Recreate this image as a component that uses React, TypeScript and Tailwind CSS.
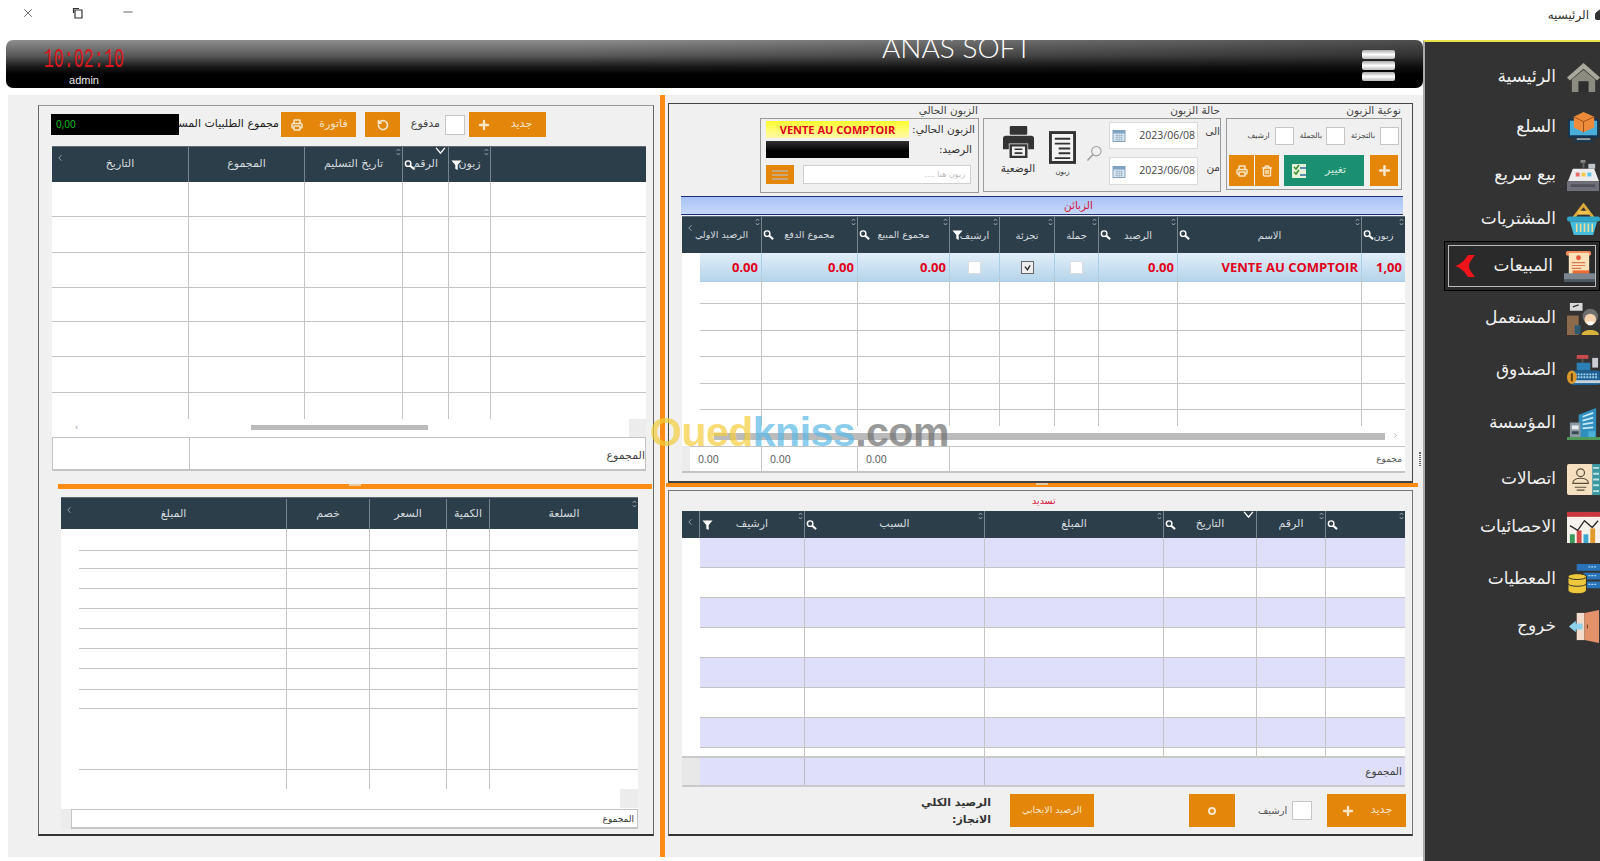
import React from "react";
import { Printer, Trash2, Plus, RotateCcw, Home, X, Minus, ChevronLeft, ChevronRight } from "lucide-react";

const Mag = ({ className = "" }: { className?: string }) => (
  <svg viewBox="0 0 12 12" className={`w-[11px] h-[11px] ${className}`}>
    <circle cx="4.5" cy="4.5" r="3" fill="none" stroke="#fff" strokeWidth="1.6" />
    <path d="M6.8 6.8L11 10.5" stroke="#fff" strokeWidth="2.2" />
  </svg>
);
const Funnel = ({ className = "" }: { className?: string }) => (
  <svg viewBox="0 0 12 12" className={`w-[11px] h-[11px] ${className}`}>
    <path d="M0.5 1H11.5L7.3 6V11.5L4.7 10V6Z" fill="#fff" />
  </svg>
);
const Sort = () => (
  <svg viewBox="0 0 6 10" className="absolute right-[1px] top-[1px] w-[5px] h-[8px]">
    <path d="M1 3.5L3 1.2L5 3.5M1 6.5L3 8.8L5 6.5" fill="none" stroke="#c9d2d8" strokeWidth="0.9" />
  </svg>
);
const Tick = ({ className = "" }: { className?: string }) => (
  <svg viewBox="0 0 12 8" className={`absolute w-[11px] h-[7px] top-0 ${className}`}>
    <path d="M1 1L6 7L11 1" fill="none" stroke="#fff" strokeWidth="1.6" />
  </svg>
);

type H = { t?: string; mag?: boolean; fun?: boolean; chev?: boolean; sort?: boolean; tick?: string; span?: string; size?: string };

function HeadCell({ c, last }: { c: H; last: boolean }) {
  return (
    <div className={`relative flex items-center justify-center text-[#d4dbdf] ${c.size ?? "text-[11px]"} ${c.span ?? ""} ${last ? "" : "border-r border-[#75848f]"}`}>
      {c.chev && <ChevronLeft className="absolute left-[3px] top-[6px] w-[10px] h-[10px]" strokeWidth={1.5} />}
      {c.mag && <Mag className="absolute left-[1px] top-1/2 -translate-y-1/2" />}
      {c.fun && <Funnel className="absolute left-[2px] top-1/2 -translate-y-1/2" />}
      {c.sort && <Sort />}
      {c.tick && <Tick className={c.tick} />}
      <span className="whitespace-nowrap">{c.t}</span>
    </div>
  );
}

function Rows({ cols, n, heights, gap }: { cols: string; n: number; heights: number[]; gap?: boolean }) {
  return (
    <>
      {heights.map((h, i) => (
        <div key={i} className={`grid ${cols}`} style={{ height: h }}>
          {Array.from({ length: n }).map((_, j) => {
            const noBottom = i === heights.length - 1 || (gap && j === 0);
            const noRight = j === n - 1 || (gap && j === 0);
            return <div key={j} className={`${noBottom ? "" : "border-b border-[#c4c4c4]"} ${noRight ? "" : "border-r border-[#c4c4c4]"}`} />;
          })}
        </div>
      ))}
    </>
  );
}

const Check = ({ className = "" }: { className?: string }) => <div className={`bg-white border border-[#c6c6c6] ${className}`} />;

const OBtn = ({ className = "", children }: { className?: string; children?: React.ReactNode }) => (
  <div className={`bg-[#e38609] text-[#f7e6c8] flex items-center justify-center h-full ${className}`}>{children}</div>
);

const Calendar = () => (
  <svg viewBox="0 0 14 14" className="w-[14px] h-[15px]">
    <rect x="1" y="2" width="12" height="11" fill="#dbe9f5" stroke="#6c8aa8" strokeWidth="0.8" />
    <rect x="1" y="2" width="12" height="3" fill="#7fa3c4" />
    <path d="M3 7H11M3 9H11M3 11H11M5 5V13M7.2 5V13M9.4 5V13" stroke="#90a6bc" strokeWidth="0.5" />
  </svg>
);

const DateBox = ({ h }: { h: string }) => (
  <div className={`w-[89px] ${h} bg-white border border-[#dadada] flex items-center justify-between pl-[2px] pr-[2px]`}>
    <Calendar />
    <span className="text-[10.5px] text-[#444] [font-family:'Open_Sans',sans-serif]">2023/06/08</span>
  </div>
);

const Group = ({ title, w, h, children }: { title: string; w: string; h: string; children: React.ReactNode }) => (
  <div className={`flex flex-col ${w}`}>
    <div className="h-[14px] text-[10.5px] leading-[13px] text-[#444] text-right pr-[1px] whitespace-nowrap">{title}</div>
    <div className={`${h} border border-[#9a9a9a] bg-[#f0f0f0]`}>{children}</div>
  </div>
);

const rightHead: H[] = [
  { t: "الرصيد الاولي", chev: true, sort: true, span: "col-span-2", size: "text-[9.5px]" },
  { t: "مجموع الدفع", mag: true, sort: true, size: "text-[9.5px]" },
  { t: "مجموع المبيع", mag: true, sort: true, size: "text-[9.5px]" },
  { t: "ارشيف", fun: true, sort: true, size: "text-[10px]" },
  { t: "تجزئة", sort: true, size: "text-[10px]" },
  { t: "جملة", sort: true, size: "text-[10px]" },
  { t: "الرصيد", mag: true, sort: true, size: "text-[10px]" },
  { t: "الاسم", mag: true, sort: true, size: "text-[10px]" },
  { t: "زبون", mag: true, sort: true, size: "text-[10px]" },
];
const leftHead: H[] = [
  { t: "التاريخ", chev: true },
  { t: "المجموع" },
  { t: "تاريخ التسليم", sort: true },
  { t: "الرقم", mag: true, tick: "right-[2px]" },
  { t: "زبون", fun: true, sort: true },
  {},
];
const leftLowHead: H[] = [
  { t: "المبلغ", chev: true },
  { t: "خصم" },
  { t: "السعر" },
  { t: "الكمية" },
  { t: "السلعة", sort: true },
];
const payHead: H[] = [
  { t: "", chev: true },
  { t: "ارشيف", fun: true, sort: true },
  { t: "السبب", mag: true, sort: true },
  { t: "المبلغ", sort: true },
  { t: "التاريخ", mag: true, tick: "right-[2px]", sort: false },
  { t: "الرقم", sort: true },
  { t: "", mag: true, sort: true },
];

const I = ({ children }: { children: React.ReactNode }) => (
  <svg viewBox="0 0 34 34" className="w-[33px] h-[33px] shrink-0">{children}</svg>
);
const icons: Record<string, React.ReactNode> = {
  home: (
    <I>
      <path d="M0 17L17 2L34 17L31 20L17 8L3 20Z" fill="#a8a89c" />
      <path d="M5 19L17 9L29 19V32H22V21H12V32H5Z" fill="#8b8b80" />
      <rect x="12" y="21" width="10" height="11" fill="#2e2e2e" />
    </I>
  ),
  box: (
    <I>
      <rect x="1" y="8" width="32" height="20" rx="2" fill="#16344e" />
      <rect x="3" y="10" width="28" height="15" fill="#4aaedb" />
      <path d="M17 1L28 6V17L17 22L7 17V6Z" fill="#ed8b3a" />
      <path d="M7 6L17 11L28 6M17 11V22" fill="none" stroke="#9d4d18" strokeWidth="1" />
      <rect x="10" y="28" width="14" height="2" fill="#98a3ab" />
      <rect x="6" y="30" width="22" height="2" fill="#1a3850" />
    </I>
  ),
  register: (
    <I>
      <rect x="14" y="1" width="5" height="3" fill="#8b8b8b" />
      <rect x="16" y="3" width="2" height="6" fill="#666" />
      <path d="M6 10H28L33 23H1Z" fill="#ececec" />
      <rect x="9" y="14" width="4" height="4" fill="#ef6a6a" />
      <rect x="15" y="14" width="4" height="4" fill="#f5c842" />
      <rect x="21" y="14" width="4" height="4" fill="#5cc4e8" />
      <rect x="22" y="5" width="7" height="5" fill="#bfc5c9" />
      <rect x="0" y="23" width="33" height="10" fill="#70707a" />
      <rect x="4" y="26" width="25" height="3" fill="#52525c" />
    </I>
  ),
  basket: (
    <I>
      <path d="M7 15L17 2L27 15" fill="none" stroke="#d9a83a" strokeWidth="3" />
      <rect x="11" y="8" width="12" height="4" fill="#f2c24d" />
      <rect x="0" y="14" width="34" height="5" rx="2" fill="#2fa6c7" />
      <path d="M3 19H31L27 33H7Z" fill="#45bedd" />
      <path d="M10 21V30M14 21V30M18 21V30M22 21V30M26 21V30" stroke="#f0dc9a" strokeWidth="1.6" />
    </I>
  ),
  sales: (
    <I>
      <rect x="4" y="1" width="26" height="5" rx="2" fill="#f08a5a" />
      <rect x="7" y="3" width="21" height="22" fill="#fbe2b8" />
      <circle cx="17" cy="8" r="2.5" fill="#e4583a" />
      <path d="M10 13H24M10 16H24M10 19H20" stroke="#d97a52" strokeWidth="1.2" />
      <rect x="11" y="21" width="17" height="5" fill="#ee6a30" />
      <rect x="2" y="24" width="32" height="8" fill="#7c8690" />
      <rect x="2" y="30" width="32" height="3" fill="#4f5760" />
    </I>
  ),
  user: (
    <I>
      <rect x="3" y="1" width="13" height="8" fill="#dadada" />
      <path d="M6 5L12 3" stroke="#333" strokeWidth="1.4" />
      <rect x="0" y="14" width="12" height="20" fill="#8c6a4c" />
      <rect x="8" y="24" width="6" height="9" fill="#2f5b72" />
      <circle cx="24" cy="15" r="8" fill="#6e6e6e" />
      <circle cx="24" cy="18" r="6" fill="#f3d2ac" />
      <path d="M20 20H28L26 24H22Z" fill="#fff" />
      <path d="M15 34C15 27 33 27 33 34Z" fill="#d9b23e" />
    </I>
  ),
  cash: (
    <I>
      <rect x="10" y="1" width="12" height="4" fill="#c94b4b" />
      <rect x="15" y="5" width="2" height="5" fill="#555" />
      <rect x="10" y="9" width="14" height="8" fill="#2c7fb5" />
      <rect x="26" y="4" width="6" height="10" fill="#c9ccd0" />
      <rect x="4" y="17" width="30" height="15" rx="2" fill="#1f5f91" />
      <path d="M8 21H32M8 24H32" stroke="#9ed2ee" strokeWidth="2" strokeDasharray="2 1" />
      <rect x="6" y="27" width="28" height="3" fill="#c6d3dc" />
      <ellipse cx="5" cy="24" rx="5" ry="7" fill="#d9982b" />
      <rect x="4" y="20" width="2" height="8" fill="#5b3b10" />
    </I>
  ),
  building: (
    <I>
      <path d="M12 8L30 1V32H12Z" fill="#2f8fbf" />
      <path d="M16 10L27 6M16 14L27 11M16 18L27 16M16 22L27 21" stroke="#c8e8f5" strokeWidth="1.8" />
      <rect x="3" y="16" width="11" height="16" fill="#8a99a3" />
      <rect x="5" y="19" width="7" height="4" fill="#e6edf0" />
      <rect x="5" y="25" width="7" height="3" fill="#3a4a54" />
      <rect x="22" y="25" width="7" height="7" fill="#4bb1d9" />
      <rect x="0" y="31" width="34" height="3" fill="#4f9a58" />
    </I>
  ),
  contact: (
    <I>
      <rect x="0" y="1" width="27" height="32" rx="2" fill="#f4e0bf" />
      <rect x="26" y="1" width="8" height="32" fill="#3b97a0" />
      <path d="M27 5H33M27 11H33M27 17H33M27 23H33M27 29H33" stroke="#bde3e4" strokeWidth="2" />
      <circle cx="14" cy="10" r="4" fill="none" stroke="#5a4d3c" strokeWidth="1.2" />
      <path d="M6 21C6 14 22 14 22 21Z" fill="none" stroke="#5a4d3c" strokeWidth="1.2" />
      <path d="M8 25H20M10 28H18" stroke="#5a4d3c" strokeWidth="1.2" />
    </I>
  ),
  chart: (
    <I>
      <rect x="0" y="1" width="34" height="32" fill="#f6f1ea" />
      <rect x="0" y="1" width="34" height="5" fill="#c9383e" />
      <rect x="3" y="24" width="5" height="9" fill="#3a9a5b" />
      <rect x="10" y="20" width="5" height="13" fill="#d64a4a" />
      <rect x="17" y="24" width="5" height="9" fill="#3da9cf" />
      <rect x="24" y="18" width="5" height="15" fill="#e29a2e" />
      <path d="M3 15L11 20L18 10L26 17L32 10" fill="none" stroke="#2a2a2a" strokeWidth="1.4" />
    </I>
  ),
  data: (
    <I>
      <rect x="10" y="1" width="24" height="7" fill="#2b73b8" />
      <rect x="17" y="10" width="17" height="7" fill="#2b73b8" />
      <rect x="17" y="19" width="17" height="7" fill="#2b73b8" />
      <path d="M22 4H31M22 13H31M22 22H31" stroke="#a6d8f3" strokeWidth="1.5" strokeDasharray="2 1" />
      <path d="M1 14C1 10 20 10 20 14V28C20 33 1 33 1 28Z" fill="#eec83a" stroke="#2c2c2c" strokeWidth="1" />
      <path d="M1 14C1 18 20 18 20 14M1 21C1 25 20 25 20 21" fill="none" stroke="#2c2c2c" strokeWidth="1" />
    </I>
  ),
  door: (
    <I>
      <rect x="10" y="3" width="8" height="28" fill="#f3dccb" />
      <path d="M18 3L33 0V34L18 31Z" fill="#e2916b" />
      <path d="M21 15V19" stroke="#6b3a1e" strokeWidth="1" />
      <path d="M2 17L9 11V14H16V20H9V23Z" fill="#8fd0ea" />
    </I>
  ),
};

const menu = [
  { t: "الرئيسية", ic: "home", h: "h-[50px]" },
  { t: "السلع", ic: "box", h: "h-[50px]" },
  { t: "بيع سريع", ic: "register", h: "h-[46px]" },
  { t: "المشتريات", ic: "basket", h: "h-[42px]" },
  { t: "المبيعات", ic: "sales", h: "h-[52px]", active: true },
  { t: "المستعمل", ic: "user", h: "h-[52px]" },
  { t: "الصندوق", ic: "cash", h: "h-[52px]" },
  { t: "المؤسسة", ic: "building", h: "h-[54px]" },
  { t: "اتصالات", ic: "contact", h: "h-[58px]" },
  { t: "الاحصائيات", ic: "chart", h: "h-[38px]" },
  { t: "المعطيات", ic: "data", h: "h-[66px]" },
  { t: "خروج", ic: "door", h: "h-[28px]" },
];

const rowBg = "bg-[linear-gradient(180deg,#e2eef8,#b5d4ea)] border-b border-[#a9cfe6]";
const upperCols = "grid-cols-[18px_62px_96px_92px_50px_55px_44px_79px_184px_43px]";

export default function App() {
  return (
    <div className="w-[1600px] h-[861px] overflow-hidden bg-white flex flex-col [font-family:'DejaVu_Sans',sans-serif]">
      {/* window bar */}
      <div className="h-[40px] shrink-0 flex items-start justify-between">
        <div className="flex items-center gap-[37px] pl-[21px] pt-[6px] text-[#333]">
          <X className="w-[14px] h-[14px]" strokeWidth={1.2} />
          <svg viewBox="0 0 12 12" className="w-[12px] h-[12px]">
            <path d="M3 3H10V11H3Z M1.5 6V1.5H7" fill="none" stroke="#333" strokeWidth="1.2" />
          </svg>
          <Minus className="w-[14px] h-[14px] -mt-[3px]" strokeWidth={1.3} />
        </div>
        <div className="flex items-center gap-[5px] pt-[6px] mr-[-6px] text-[12px] text-[#333]">
          <span>الرئيسيه</span>
          <Home className="w-[12px] h-[12px]" fill="#333" />
        </div>
      </div>

      <div className="flex flex-1 min-h-0">
        <div className="w-[1423px] flex flex-col shrink-0">
          {/* header */}
          <div className="ml-[6px] w-[1417px] h-[48px] shrink-0 rounded-[7px] overflow-hidden flex items-start bg-[linear-gradient(90deg,rgba(0,0,0,0)_0%,rgba(0,0,0,0)_40%,rgba(0,0,0,0.45)_100%),linear-gradient(180deg,#8e8e8e_0%,#5a5a5a_32%,#1c1c1c_55%,#000_72%)]">
            <div className="ml-[36px] w-[84px] flex flex-col items-center pt-[9px]">
              <span className="text-[27px] leading-[23px] text-[#d8181c] whitespace-nowrap scale-x-[0.62] [font-family:'Liberation_Mono',monospace]">10:02:10</span>
              <span className="text-[11px] leading-[13px] mt-[2px] text-[#e8e8e8] [font-family:'Liberation_Sans',sans-serif]">admin</span>
            </div>
            <div className="ml-[756px] -mt-[11px] text-[28px] leading-[36px] text-white [font-family:'Lato',sans-serif] font-light whitespace-nowrap">ANAS SOFT</div>
            <div className="ml-auto mr-[28px] mt-[10px] flex flex-col gap-[2px]">
              <div className="w-[33px] h-[9px] rounded-[2px] bg-[linear-gradient(180deg,#aaa,#fff_50%,#bbb)]" />
              <div className="w-[33px] h-[9px] rounded-[2px] bg-[linear-gradient(180deg,#aaa,#fff_50%,#bbb)]" />
              <div className="w-[33px] h-[9px] rounded-[2px] bg-[linear-gradient(180deg,#aaa,#fff_50%,#bbb)]" />
            </div>
          </div>

          {/* main */}
          <div className="relative ml-[8px] mt-[7px] h-[762px] w-[1415px] bg-[#f0f0f0] flex shrink-0">
            {/* left panel */}
            <div className="ml-[30px] mt-[10px] w-[616px] h-[731px] shrink-0 border border-[#666] border-b-2 border-b-[#333] border-t-[#999] flex flex-col">
              <div className="h-[25px] mt-[6px] shrink-0 flex items-center pl-[12px]">
                <div className="w-[128px] h-[21px] bg-black text-[#18c418] text-[10px] pl-[5px] flex items-center [font-family:'Open_Sans',sans-serif] shrink-0">0,00</div>
                <div className="w-[100px] overflow-hidden text-[11px] text-[#222] whitespace-nowrap shrink-0 flex justify-end">مجموع الطلبيات المسددة</div>
                <OBtn className="ml-[2px] w-[75px] gap-[16px] text-[11px] shrink-0 pl-[2px]">
                  <Printer className="w-[12px] h-[12px]" strokeWidth={3} />
                  <span>فاتورة</span>
                </OBtn>
                <OBtn className="ml-[9px] w-[35px] shrink-0">
                  <RotateCcw className="w-[12px] h-[12px]" strokeWidth={3.5} />
                </OBtn>
                <div className="w-[45px] text-[11px] text-[#444] text-right pr-[5px] shrink-0">مدفوع</div>
                <Check className="w-[20px] h-[20px] shrink-0" />
                <OBtn className="ml-[4px] w-[77px] gap-[20px] text-[11px] shrink-0 pr-[6px]">
                  <Plus className="w-[14px] h-[14px]" strokeWidth={4} />
                  <span>جديد</span>
                </OBtn>
              </div>

              <div className="ml-[13px] w-[594px] mt-[9px] h-[325px] bg-white shrink-0 flex flex-col">
                <div className="grid grid-cols-[137px_116px_98px_46px_42px_155px] h-[36px] bg-[#2d3e4b] border-t border-[#5c6b75]">
                  {leftHead.map((c, i) => <HeadCell key={i} c={c} last={i === 5} />)}
                </div>
                <Rows cols="grid-cols-[137px_116px_98px_46px_42px_155px]" n={6} heights={[35, 36, 35, 34, 35, 36, 26]} />
                <div className="h-[18px] flex items-center justify-between relative">
                  <span className="ml-[23px] text-[8px] text-[#999]">‹</span>
                  <div className="absolute left-[199px] top-[6px] w-[177px] h-[5px] bg-[#bbb]" />
                  <div className="w-[17px] h-[18px] bg-[#ececec]" />
                </div>
                <div className="grid grid-cols-[137px_457px] h-[34px] border border-[#c4c4c4] border-b-2">
                  <div className="border-r border-[#c4c4c4]" />
                  <div className="text-[11px] text-[#444] text-right pr-[2px] pt-[10px]">المجموع</div>
                </div>
              </div>

              <div className="ml-[19px] w-[594px] mt-[13px] h-[5px] bg-[#ff8a14] shrink-0 flex justify-center">
                <div className="w-[12px] h-[2px] bg-[#e9c9a0]" />
              </div>

              <div className="ml-[22px] w-[577px] mt-[8px] h-[332px] shrink-0 bg-white flex flex-col">
                <div className="grid grid-cols-[226px_83px_77px_43px_148px] h-[32px] bg-[#2d3e4b] border-t border-[#5c6b75] pt-[1px]">
                  {leftLowHead.map((c, i) => <HeadCell key={i} c={c} last={i === 4} />)}
                </div>
                <Rows cols="grid-cols-[18px_208px_83px_77px_43px_148px]" n={6} gap heights={[22, 18, 20, 20, 20, 20, 20, 21, 19, 61, 19]} />
                <div className="h-[20px] flex justify-end">
                  <div className="w-[18px] h-[19px] bg-[#ececec]" />
                </div>
                <div className="flex h-[20px] bg-[#ececec]">
                  <div className="w-[10px]" />
                  <div className="flex-1 bg-white border border-[#c4c4c4] border-b-2 text-[9px] text-[#333] text-right pr-[3px] leading-[18px]">المجموع</div>
                </div>
              </div>
            </div>

            {/* vertical divider */}
            <div className="ml-[6px] w-[5px] h-full bg-[#ff8a14] shrink-0" />

            {/* right column */}
            <div className="ml-[3px] w-[745px] mt-[8px] flex flex-col shrink-0">
              <div className="h-[380px] shrink-0 border border-[#444] border-b-2 flex flex-col">
                <div className="flex items-start justify-end pr-[10px] gap-[4px] h-[89px] shrink-0">
                  <Group title="الزبون الحالي" w="w-[219px]" h="h-[75px]">
                    <div className="flex flex-col pl-[5px] pt-[2px] pr-[3px]">
                      <div className="flex items-center h-[17px] justify-between">
                        <div className="w-[143px] h-[17px] bg-[linear-gradient(180deg,#ffff30,#fff8a8)] text-[#e0001a] font-bold text-[11px] text-center leading-[17px] [font-family:'Open_Sans',sans-serif]">VENTE AU COMPTOIR</div>
                        <span dir="rtl" className="text-[10.5px] text-[#333]">الزبون الحالي:</span>
                      </div>
                      <div className="flex items-center h-[17px] mt-[3px] justify-between">
                        <div className="w-[143px] h-[17px] bg-[linear-gradient(180deg,#333,#000_60%)]" />
                        <span dir="rtl" className="text-[10.5px] text-[#333] pr-[3px]">الرصيد:</span>
                      </div>
                      <div className="flex items-center h-[19px] mt-[7px]">
                        <div className="w-[28px] h-[19px] bg-[#e38609] flex flex-col justify-center gap-[2px] px-[6px]">
                          <div className="h-[2px] bg-[#c9a77a]" />
                          <div className="h-[2px] bg-[#c9a77a]" />
                          <div className="h-[2px] bg-[#c9a77a]" />
                        </div>
                        <div dir="rtl" className="ml-[9px] w-[168px] h-[19px] bg-white border border-[#cfcfcf] text-[8px] text-[#bbb] text-right pr-[5px] leading-[17px]">زبون هنا ....</div>
                      </div>
                    </div>
                  </Group>
                  <Group title="حالة الزبون" w="w-[238px]" h="h-[74px]">
                    <div className="flex items-start h-full pl-[17px]">
                      <div className="flex flex-col items-center w-[34px] pt-[6px]">
                        <svg viewBox="0 0 34 34" className="w-[33px] h-[33px]">
                          <rect x="8" y="1" width="18" height="9" rx="1" fill="#333" />
                          <path d="M4 11H30Q33 11 33 14V25H27V19H7V25H1V14Q1 11 4 11Z" fill="#333" />
                          <path d="M9 21H25V33H9Z" fill="none" stroke="#333" strokeWidth="2.5" />
                          <path d="M13 25H21M13 29H21" stroke="#333" strokeWidth="1.6" />
                        </svg>
                        <span className="text-[10.5px] text-[#333] mt-[3px] whitespace-nowrap">الوضعية</span>
                      </div>
                      <div className="flex flex-col items-center w-[28px] ml-[14px] pt-[12px]">
                        <svg viewBox="0 0 28 34" className="w-[27px] h-[33px]">
                          <rect x="1.5" y="1.5" width="25" height="31" fill="#f4f4f4" stroke="#333" strokeWidth="3" />
                          <path d="M6 8H22M6 13H22M10 18H22M10 23H22M6 28H22" stroke="#333" strokeWidth="2" />
                        </svg>
                        <span className="text-[7px] text-[#333] mt-[3px]">زبون</span>
                      </div>
                      <svg viewBox="0 0 17 17" className="w-[17px] h-[17px] ml-[10px] mt-[26px]">
                        <circle cx="11" cy="6" r="5" fill="none" stroke="#9a9a9a" strokeWidth="1.1" />
                        <path d="M7.5 9.5L1.5 16" stroke="#9a9a9a" strokeWidth="1.6" />
                      </svg>
                      <div className="flex flex-col gap-[8px] ml-[7px] pt-[3px]">
                        <DateBox h="h-[27px]" />
                        <DateBox h="h-[28px]" />
                      </div>
                      <div className="flex flex-col ml-[5px] text-[10.5px] text-[#444] pt-[5px] gap-[20px] w-[18px] text-right">
                        <span>الى</span>
                        <span>من</span>
                      </div>
                    </div>
                  </Group>
                  <Group title="نوعية الزبون" w="w-[176px] ml-[1px]" h="h-[72px]">
                    <div className="flex flex-col h-full">
                      <div className="flex items-center justify-end pt-[8px] pr-[2px] text-[7.5px] text-[#444]">
                        <span>ارشيف</span>
                        <Check className="w-[19px] h-[18px] ml-[5px]" />
                        <span className="ml-[6px]">بالجملة</span>
                        <Check className="w-[19px] h-[18px] ml-[4px]" />
                        <span className="ml-[6px]">بالتجزئة</span>
                        <Check className="w-[19px] h-[18px] ml-[5px]" />
                      </div>
                      <div className="flex justify-end h-[31px] mt-[10px] pr-[3px]">
                        <OBtn className="w-[25px]"><Printer className="w-[12px] h-[12px]" strokeWidth={3} /></OBtn>
                        <OBtn className="w-[24px] ml-[1px]"><Trash2 className="w-[12px] h-[12px]" strokeWidth={3} /></OBtn>
                        <div className="ml-[5px] w-[80px] h-full bg-[#1a9070] flex items-center gap-[18px] pl-[7px] text-[11px] text-[#cfe9df]">
                          <svg viewBox="0 0 16 16" className="w-[16px] h-[16px]">
                            <rect x="1" y="1" width="14" height="14" fill="#e6f2d8" />
                            <path d="M3 4L5 6L8 2M3 9L5 11L8 7" fill="none" stroke="#3d8f2e" strokeWidth="1.5" />
                            <path d="M9 12H15M9 5H15" stroke="#2d6da3" strokeWidth="1.5" />
                          </svg>
                          <span>تغيير</span>
                        </div>
                        <OBtn className="w-[28px] ml-[6px]"><Plus className="w-[15px] h-[15px]" strokeWidth={4} /></OBtn>
                      </div>
                    </div>
                  </Group>
                </div>

                <div className="ml-[12px] w-[722px] h-[19px] mt-[3px] shrink-0 border-y border-[#1d2f78] bg-[linear-gradient(180deg,#a9c3f5,#c6d8fa)] text-[10.5px] text-[#d4123c] pl-[383px] leading-[16px]">الزبائن</div>

                <div className="ml-[13px] w-[723px] mt-[1px] h-[210px] bg-white shrink-0 flex flex-col">
                  <div className={`grid ${upperCols} h-[37px] bg-[#2d3e4b] border-t border-[#5c6b75] shrink-0`}>
                    {rightHead.map((c, i) => <HeadCell key={i} c={c} last={i === 8} />)}
                  </div>
                  <div className={`grid ${upperCols} h-[25px] shrink-0 text-[#e0001a] font-bold text-[13px] leading-[28px] text-right [font-family:'Open_Sans',sans-serif]`}>
                    <div />
                    <div className={`${rowBg} border-r pr-[3px]`}>0.00</div>
                    <div className={`${rowBg} border-r pr-[3px]`}>0.00</div>
                    <div className={`${rowBg} border-r pr-[3px]`}>0.00</div>
                    <div className={`${rowBg} border-r flex items-center justify-center`}><Check className="w-[13px] h-[13px] border-[#ddd]" /></div>
                    <div className={`${rowBg} border-r flex items-center justify-center`}>
                      <div className="w-[13px] h-[13px] bg-[#eee] border border-[#666] flex items-center justify-center">
                        <svg viewBox="0 0 8 8" className="w-[7px] h-[7px]"><path d="M1 3L4 6.5L7 1.5" fill="none" stroke="#333" strokeWidth="1.6" /></svg>
                      </div>
                    </div>
                    <div className={`${rowBg} border-r flex items-center justify-center`}><Check className="w-[13px] h-[13px] border-[#ddd]" /></div>
                    <div className={`${rowBg} border-r pr-[3px]`}>0.00</div>
                    <div className={`${rowBg} border-r pr-[3px] whitespace-nowrap`}>VENTE AU COMPTOIR</div>
                    <div className={`${rowBg} pr-[3px]`}>1,00</div>
                  </div>
                  <Rows cols={upperCols} n={10} gap heights={[26, 27, 26, 27, 26, 16]} />
                </div>
                <div className="ml-[13px] w-[723px] h-[20px] bg-white shrink-0 flex items-center relative">
                  <div className="absolute left-[32px] top-[7px] w-[671px] h-[7px] bg-[#bbb]" />
                  <ChevronRight className="absolute right-[6px] top-[6px] w-[7px] h-[7px] text-[#888]" />
                </div>
                <div className="ml-[13px] w-[723px] h-[27px] shrink-0 flex bg-[#ececec] border-b-2 border-[#c4c4c4]">
                  <div className="w-[8px]" />
                  <div className="grid grid-cols-[72px_96px_92px_455px] flex-1 bg-white text-[10.5px] text-[#555] [font-family:'Open_Sans',sans-serif] leading-[25px] border-t border-[#c4c4c4]">
                    <div className="border-r border-[#c4c4c4] pl-[8px]">0.00</div>
                    <div className="border-r border-[#c4c4c4] pl-[8px]">0.00</div>
                    <div className="border-r border-[#c4c4c4] pl-[8px]">0.00</div>
                    <div className="text-right pr-[3px] text-[9px] [font-family:'DejaVu_Sans',sans-serif]">مجموع</div>
                  </div>
                </div>
              </div>

              <div className="-ml-[2px] w-[752px] h-[4px] bg-[#ff8a14] shrink-0 flex justify-center">
                <div className="w-[12px] h-[2px] bg-[#e9c9a0]" />
              </div>

              <div className="mt-[3px] h-[346px] shrink-0 border border-[#777] border-b-2 border-b-[#333] flex flex-col">
                <div className="h-[20px] shrink-0 text-[9.5px] leading-[20px] text-[#d4123c] pl-[363px]">تسديد</div>
                <div className="ml-[13px] w-[723px] shrink-0 flex flex-col bg-white">
                  <div className="grid grid-cols-[18px_105px_180px_179px_93px_69px_79px] h-[27px] bg-[#2d3e4b]">
                    {payHead.map((c, i) => <HeadCell key={i} c={c} last={i === 6} />)}
                  </div>
                  {[0, 1, 2, 3, 4, 5, 6].map((i) => (
                    <div key={i} className="grid grid-cols-[18px_105px_180px_179px_93px_69px_79px] h-[30px]">
                      <div />
                      {[0, 1, 2, 3, 4, 5].map((j) => (
                        <div key={j} className={`border-b border-[#c4c4c4] ${j < 5 ? "border-r" : ""} ${i % 2 === 0 ? "bg-[#dfdffa]" : "bg-white"}`} />
                      ))}
                    </div>
                  ))}
                  <div className="grid grid-cols-[18px_105px_180px_179px_93px_69px_79px] h-[8px]">
                    <div />
                    {[0, 1, 2, 3, 4, 5].map((j) => (
                      <div key={j} className={`bg-white ${j < 5 ? "border-r border-[#c4c4c4]" : ""}`} />
                    ))}
                  </div>
                  <div className="grid grid-cols-[18px_105px_180px_420px] h-[31px] bg-[#dfdffa] border-t-2 border-b-2 border-[#c9c9c9]">
                    <div className="bg-[#e8e8e8]" />
                    <div className="border-r border-[#b9b9c9]" />
                    <div className="border-r border-[#b9b9c9]" />
                    <div className="text-[10.5px] text-[#444] text-right pr-[3px] leading-[27px]">المجموع</div>
                  </div>
                </div>
                <div className="flex items-center h-[33px] mt-[7px] shrink-0">
                  <div dir="rtl" className="ml-[221px] w-[101px] text-[11px] leading-[17px] font-bold text-[#333]">
                    <div className="text-right">الرصيد الكلي</div>
                    <div className="text-right">الانجاز:</div>
                  </div>
                  <OBtn className="ml-[19px] w-[84px] text-[9.5px]">الرصيد الايجابي</OBtn>
                  <OBtn className="ml-[95px] w-[46px]">
                    <div className="w-[8px] h-[8px] rounded-full border-2 border-[#f7e6c8]" />
                  </OBtn>
                  <span className="ml-[23px] w-[29px] text-[10px] text-[#555] text-right">ارشيف</span>
                  <Check className="ml-[5px] w-[20px] h-[19px]" />
                  <OBtn className="ml-[15px] w-[79px] gap-[16px] text-[11px]">
                    <Plus className="w-[14px] h-[14px]" strokeWidth={4} />
                    <span>جديد</span>
                  </OBtn>
                </div>
              </div>
            </div>

            <div className="ml-[6px] mt-[357px] h-[14px] w-[2px] border-x border-dotted border-[#666] shrink-0" />

            {/* watermark over content */}
            <div className="absolute left-[642px] top-[315px] pointer-events-none whitespace-nowrap text-[41px] leading-[44px] font-bold [font-family:'Liberation_Sans',sans-serif] tracking-[-0.5px]">
              <span className="text-[#f5cd3a] opacity-70">Oued</span>
              <span className="text-[#5ab8e6] opacity-70">kniss</span>
              <span className="text-[#6f6f6f] opacity-70">.com</span>
            </div>
          </div>
        </div>

        {/* sidebar */}
        <aside className="w-[177px] shrink-0 bg-[#333333] border-t-2 border-t-[#e9e34a] border-l-2 border-l-[#a9a9a9] pt-[10px] overflow-hidden flex flex-col">
          {menu.map((m) => (
            <div key={m.t} className={`${m.h} shrink-0 flex items-center justify-end`}>
              {m.active ? (
                <div className="w-[156px] h-[50px] bg-[#2a2a2a] border border-black p-[3px]">
                  <div className="w-full h-full border border-[#bbb] flex items-center justify-end pr-[10px]">
                    <svg viewBox="0 0 20 22" className="w-[20px] h-[22px] mr-[19px]"><path d="M13 0H20C16 5 14 8 14 11C14 14 16 17 20 22H13C10 17 6 13 0 11C6 9 10 5 13 0Z" fill="#f0141a" /></svg>
                    <span className="text-[17px] text-[#eee] mr-[9px] whitespace-nowrap">{m.t}</span>
                    <div className="w-[33px] shrink-0 -mr-[10px]">{icons[m.ic]}</div>
                  </div>
                </div>
              ) : (
                <>
                  <span className="text-[17px] text-[#f0f0f0] whitespace-nowrap">{m.t}</span>
                  <div className="ml-[11px]">{icons[m.ic]}</div>
                </>
              )}
            </div>
          ))}
        </aside>
      </div>
    </div>
  );
}
